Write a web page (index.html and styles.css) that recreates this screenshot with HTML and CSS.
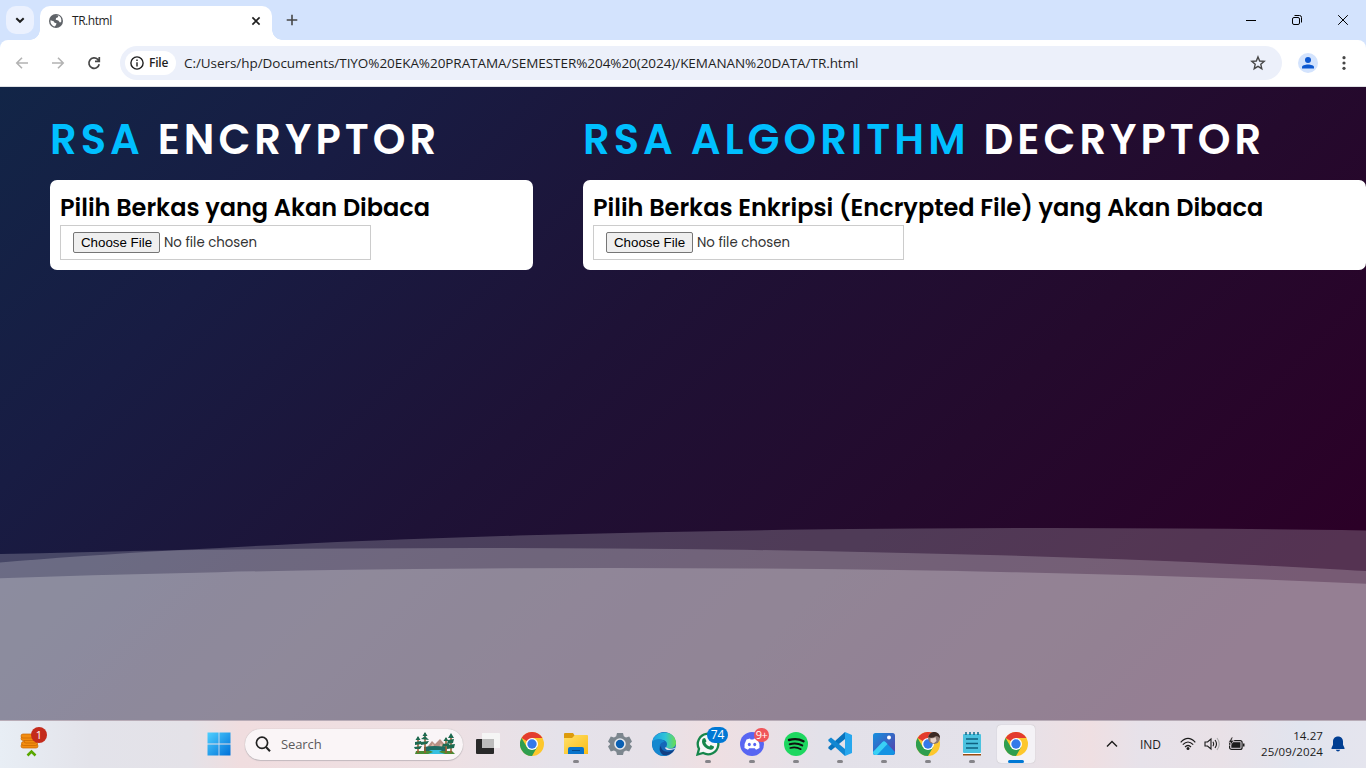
FILE: index.html
```html
<!DOCTYPE html>
<html lang="id">
<head>
<meta charset="utf-8">
<title>TR.html</title>
<link rel="stylesheet" href="styles.css">
</head>
<body>
<div class="desktop">
  <header class="tabstrip">
    <div class="tab-search"><svg width="12" height="12" viewBox="0 0 12 12" fill="none" stroke="#1f1f1f" stroke-width="2"><path d="M2.3 4.2 6 7.8 9.7 4.2"/></svg></div>
    <div class="tab">
      <svg class="globe" width="14" height="14" viewBox="0 0 14 14"><circle cx="7" cy="7" r="7" fill="#5f6368"/><path d="M1.5 6.3 4.6 7.2 5.6 8.7 7.5 9.2 7 11 5.8 12.6C2.8 12 1.2 9.3 1.5 6.3ZM6 1.5l3.5-.2-.6 1.9-1.8.8-.4 1.8 2.6.8 1.6 2 1.3-.7C12.9 4.700 11.500 2.500 9.500 1.500Z" fill="#fff"/></svg>
      <span class="tab-title">TR.html</span>
      <svg class="tab-close" width="10" height="10" viewBox="0 0 10 10" stroke="#1f1f1f" stroke-width="1.6"><path d="M1.400 1.400 8.600 8.600M8.600 1.400 1.400 8.600"/></svg>
    </div>
    <svg class="new-tab" width="12" height="12" viewBox="0 0 12 12" stroke="#474747" stroke-width="1.600"><path d="M6 .7v10.600M.7 6h10.600"/></svg>
    <div class="window-buttons">
      <svg width="12" height="12" viewBox="0 0 12 12" stroke="#000" fill="none"><path d="M1 6.500h10"/></svg>
      <svg width="12" height="12" viewBox="0 0 12 12" stroke="#000" fill="none"><rect x="1.500" y="3.500" width="7" height="7" rx="1.500"/><path d="M3.500 1.500h5a2 2 0 0 1 2 2v5"/></svg>
      <svg width="12" height="12" viewBox="0 0 12 12" stroke="#000" fill="none"><path d="M1.200 1.200l9.600 9.600M10.800 1.200l-9.600 9.600"/></svg>
    </div>
  </header>
  <nav class="toolbar">
    <div class="nav-buttons">
      <svg width="14" height="14" viewBox="0 0 14 14" stroke="#b3b3b3" stroke-width="1.600" fill="none"><path d="M13 7H2M7 1.800 1.800 7 7 12.200"/></svg>
      <svg width="14" height="14" viewBox="0 0 14 14" stroke="#b3b3b3" stroke-width="1.600" fill="none"><path d="M1 7h11M7 1.800 12.200 7 7 12.200"/></svg>
      <svg width="14" height="14" viewBox="0 0 14 14" stroke="#474747" stroke-width="1.700" fill="none"><path d="M12.200 8.200A5.200 5.200 0 1 1 10.800 3.400L12 4.800M12.300 1v4.400H8"/></svg>
    </div>
    <div class="omnibox">
      <div class="file-chip"><svg width="14" height="14" viewBox="0 0 14 14"><circle cx="7" cy="7" r="6.100" fill="none" stroke="#1f1f1f" stroke-width="1.400"/><path d="M6.300 6.200h1.400v4.200H6.300zM6.300 3.600h1.400V5H6.300z" fill="#1f1f1f"/></svg><span class="file-label">File</span></div>
      <span class="url">C:/Users/hp/Documents/TIYO%20EKA%20PRATAMA/SEMESTER%204%20(2024)/KEMANAN%20DATA/TR.html</span>
      <svg class="star" width="16" height="16" viewBox="0 0 16 16" fill="none" stroke="#474747" stroke-width="1.400"><path d="M8 1.900 9.700 6l4.500.4-3.400 2.900 1 4.400L8 11.400l-3.800 2.300 1-4.400L1.800 6.400 6.300 6z"/></svg>
    </div>
    <svg class="profile" width="20" height="20" viewBox="0 0 20 20"><circle cx="10" cy="10" r="10" fill="#d3e3fd"/><circle cx="10" cy="7" r="3" fill="#0b57d0"/><path d="M4 15.500v-1.300c0-3.600 12-3.600 12 0v1.300z" fill="#0b57d0"/></svg>
    <svg class="menu-dots" width="4" height="16" viewBox="0 0 4 16" fill="#474747"><circle cx="2" cy="2.700" r="1.600"/><circle cx="2" cy="8" r="1.600"/><circle cx="2" cy="13.300" r="1.600"/></svg>
  </nav>
  <main class="page">
    <svg class="waves" width="1366" height="192" viewBox="0 0 1366 192" fill="#fff">
      <path fill-opacity=".2" d="M-316 192V96A1366 96 0 0 1 2416 96V192Z"/>
      <path fill-opacity=".2" d="M-889 192V116A1366 96 0 0 1 1843 116V192Z"/>
      <path fill-opacity=".225" d="M-751 192V136A1366 96 0 0 1 1981 136V192Z"/>
    </svg>
    <section class="panel panel-encrypt">
      <h1><span class="accent">RSA</span> ENCRYPTOR</h1>
      <div class="card">
        <h2>Pilih Berkas yang Akan Dibaca</h2>
        <div class="file-input"><button class="choose">Choose File</button><span class="no-file">No file chosen</span></div>
      </div>
    </section>
    <section class="panel panel-decrypt">
      <h1><span class="accent">RSA ALGORITHM</span> DECRYPTOR</h1>
      <div class="card">
        <h2>Pilih Berkas Enkripsi (Encrypted File) yang Akan Dibaca</h2>
        <div class="file-input"><button class="choose">Choose File</button><span class="no-file">No file chosen</span></div>
      </div>
    </section>
  </main>
  <footer class="taskbar">
    <svg width="0" height="0" class="defs"><defs>
      <linearGradient id="win" x2="1" y2="1"><stop stop-color="#4fd0ff"/><stop offset="1" stop-color="#0070d8"/></linearGradient>
      <linearGradient id="gold" x2="1" y2="1"><stop stop-color="#ffe06b"/><stop offset="1" stop-color="#fbbc13"/></linearGradient>
      <linearGradient id="edgeTop"><stop stop-color="#1b9de2"/><stop offset=".55" stop-color="#2fc4d8"/><stop offset="1" stop-color="#6bdd4c"/></linearGradient>
      <linearGradient id="photo" x2="1" y2="1"><stop stop-color="#1490df"/><stop offset="1" stop-color="#5b3ca8"/></linearGradient>
      <symbol id="chrome" viewBox="0 0 24 24"><circle cx="12" cy="12" r="12" fill="#fdc72c"/><path d="M12 12 1.600 6A12 12 0 0 1 22.400 6H12Z" fill="#e33b2e"/><path d="M1.600 6A12 12 0 0 0 12 24l5.200-9L12 12 6.800 15Z" fill="#2f9e4f"/><circle cx="12" cy="12" r="6" fill="#fff"/><circle cx="12" cy="12" r="4.700" fill="#3579ea"/></symbol>
    </defs></svg>
    <div class="widgets">
      <svg width="20" height="26" viewBox="0 0 20 26"><g fill="#f28c0f" stroke="#c96500" stroke-width=".7"><rect x="1" y="13" width="17" height="4" rx="2"/><rect x="1.500" y="10.500" width="16" height="4" rx="2"/><rect x="4" y="8" width="13" height="4" rx="2"/><rect x="1" y="5.500" width="14" height="4" rx="2"/><rect x="1" y="3" width="15" height="4" rx="2"/></g><path d="M7.500 24.500 11.500 20.500 15.500 24.500" stroke="#58a700" stroke-width="2.500" fill="none"/></svg>
      <span class="badge badge-red">1</span>
    </div>
    <div class="apps">
      <div class="app start"><svg width="24" height="24" viewBox="0 0 24 24" fill="url(#win)"><path d="M.5.500h11.100v11.100H.5zM12.400.5h11.100v11.100H12.400zM.5 12.400h11.100v11.100H.5zM12.400 12.400h11.100v11.100H12.400z"/></svg></div>
      <div class="search">
        <svg width="16" height="16" viewBox="0 0 16 16" fill="none" stroke="#222" stroke-width="1.700"><circle cx="7" cy="6.800" r="5.600"/><path d="M11 11l4 4.200" stroke-width="2"/></svg>
        <span class="search-label">Search</span>
        <svg class="scene" width="42" height="24" viewBox="0 0 42 24"><path d="M10 19 18 9l3 3 5-5 7 8v4z" fill="#b99084"/><path d="M15 17 19 11l2 6zM24 17l3-6 3 6z" fill="#ddb8a6"/><path d="M10 15q10-2 22 0v4H10z" fill="#1e6b62"/><path d="M2 19h36l3 3H1z" fill="#4a8c35"/><path d="M15 18h13l-3 2 6 2H14l5-2z" fill="#35bfe0"/><g stroke="#9a5a2c" stroke-width="1.500"><path d="M4 5v16M11 1v20M32 6v15M37 3v18"/></g><g fill="#1d6a50"><path d="M11 0l2.500 4h-5zM11 4l4 4-8-1zM7 10l8-1-2 3-6 1zM4 4l2.500 4h-5zM1 10l6-1 1 3-7 1zM0 15l8-1-2 3H1zM32 5l2.500 4h-5zM29 12l7-1-2 3-6 1zM37 1l3 5h-6zM34 8l6-1-1 4-6 1zM33 13l8-1-1 4-7 1z"/></g></svg>
      </div>
      <div class="app"><svg width="24" height="24" viewBox="0 0 24 24"><path d="M0 8q0-1 1-1h17v14q0 1-1 1H1q-1 0-1-1z" fill="#292929"/><path d="M6 1h17q1 0 1 1v14H7q-1 0-1-1z" fill="#f5f5f5"/><path d="M6 7h12v9H6z" fill="#bcbcbc"/></svg></div>
      <div class="app"><svg width="24" height="24"><use href="#chrome"/></svg></div>
      <div class="app running"><svg width="24" height="24" viewBox="0 0 24 24"><path d="M0 2q0-1 1-1h8l2 3-2 3H0z" fill="#dd9b0c"/><path d="M0 6h8l3-3h12q1 0 1 1v18H0z" fill="url(#gold)"/><path d="M4 22v-5q0-2 2-2h12q2 0 2 2v5z" fill="#0873cb"/><path d="M8 18.500h8" stroke="#044a8c"/></svg></div>
      <div class="app"><svg width="24" height="24" viewBox="0 0 24 24"><path d="M9 1h6l.8 3.200 2.200 1.300 3.200-1L24 9.500l-2.300 2.500L24 14.500l-2.800 5-3.200-1-2.200 1.300L15 23H9l-.8-3.200L6 18.500l-3.200 1L0 14.500 2.300 12 0 9.500l2.800-5 3.200 1 2.200-1.300z" fill="#7c868e"/><circle cx="12" cy="12" r="5.800" fill="#e7e9ed"/><circle cx="12" cy="12" r="4.200" fill="#0960b3"/></svg></div>
      <div class="app"><svg width="24" height="24" viewBox="0 0 24 24"><circle cx="12" cy="12" r="12" fill="#1467b8"/><path d="M.3 10C2-2 22-3 24 10c.5 6-6 8-10 5.500 2-3 1-7-3-7.500-4-.5-8 0-10.700 2z" fill="url(#edgeTop)"/><path d="M.3 10C3 6 11 6 12.500 10c-4-.5-7 5-3 10 1.500 2 4 3 6 3.400C7 26-1 19 .3 10z" fill="#1587cf"/><path d="M9 14c0 5 6 8 13.500 3.500C19 23 14 24 11 23 7 20 7 16 9 14z" fill="#113f83"/><path d="M14.500 15.500c2.500 1.700 6 1.500 8.700.3l-.6 1.300C17 19 13.500 18 12.800 15.500z" fill="#e8e5ed"/></svg></div>
      <div class="app running"><svg width="24" height="24" viewBox="0 0 24 24"><path d="M1.500 22.500 3 16.800A10.300 10.300 0 1 1 7.200 21z" fill="#f7f7f7" stroke="#16864b" stroke-width="2.300"/><path d="M7 6.500 9 6l1.500 3.200-1.200 1.600q1.300 2.700 4 3.700l1.500-1.500L18 14.600c.2 2-1.500 3.400-3.500 3.200C10 17 6 13 6 9.500q0-2 1-3z" fill="#16864b"/></svg><span class="badge badge-blue">74</span></div>
      <div class="app running"><svg width="24" height="24" viewBox="0 0 24 24"><circle cx="12" cy="12" r="12" fill="#5865f2"/><path d="M6.500 7.500 10 6.500l.6 1h2.800l.6-1 3.500 1Q20 11.500 19.500 16l-3.500 1.700-1.200-1.500H9.200L8 17.700 4.500 16Q4 11.500 6.500 7.500Z" fill="#fff"/><ellipse cx="9.300" cy="12.500" rx="1.500" ry="1.800" fill="#5865f2"/><ellipse cx="14.700" cy="12.500" rx="1.500" ry="1.800" fill="#5865f2"/></svg><span class="badge badge-coral">9+</span></div>
      <div class="app running"><svg width="24" height="24" viewBox="0 0 24 24" fill="none" stroke="#101010" stroke-linecap="round"><circle cx="12" cy="12" r="12" fill="#1ed760" stroke="none"/><path d="M5 8q8-2.300 14.500 1.200" stroke-width="2.400"/><path d="M5.700 12.200q6.800-2 12.500 1.200" stroke-width="2"/><path d="M6.300 16q5.700-1.500 10.500 1.200" stroke-width="1.700"/></svg></div>
      <div class="app running"><svg width="24" height="24" viewBox="0 0 24 24"><path d="M17 0 24 3v18l-7 3z" fill="#27a7ee"/><path d="M17 0v7L3 18.500.4 16.500v-1.400z" fill="#0873bd"/><path d="M17 24v-7L3 5.500.4 7.500v1.400z" fill="#1187d2"/></svg></div>
      <div class="app running"><svg width="22" height="22" viewBox="0 0 22 22"><rect width="22" height="22" rx="2.500" fill="url(#photo)"/><path d="M0 19 9.500 9q1.500-1.500 3 0L22 19q0 3-2.500 3h-17Q0 22 0 19z" fill="#1593e3"/><path d="M0 19 9.500 9q1.500-1.500 3 0l2 2L4 22H2.500Q0 22 0 19z" fill="#3ad0f5"/><circle cx="16" cy="4.500" r="2" fill="#fff"/></svg></div>
      <div class="app running"><svg width="24" height="24" viewBox="0 0 24 24"><use href="#chrome"/><circle cx="18" cy="6" r="6" fill="#8a7770"/><path d="M12.300 5Q14-.5 19 0q5 1 5 6-2-2-4-2-4 3-7.700 1z" fill="#3c2924"/><path d="M14.500 6q3 1 5-1l1 4-3 2.500-3-2z" fill="#e7d1c8"/></svg></div>
      <div class="app running"><svg width="20" height="24" viewBox="0 0 20 24"><path d="M1 20h18v3.500H1z" fill="#9b4c11"/><path d="M1 20h18v2H1z" fill="#fff"/><rect x="1" y="2" width="18" height="19" rx="1" fill="#4bc2df"/><path d="M4 0v3M8 0v3M12 0v3M16 0v3" stroke="#126a89" stroke-width="1.500"/><path d="M4 7h12M4 11.500h12M4 16h12" stroke="#0f6180" stroke-width="1.600"/></svg></div>
      <div class="app active"><svg width="24" height="24"><use href="#chrome"/></svg></div>
    </div>
    <div class="tray">
      <svg class="chevron" width="12" height="8" viewBox="0 0 12 8" fill="none" stroke="#1b1b1b" stroke-width="1.400"><path d="M1 6.500 6 1.500l5 5"/></svg>
      <span class="lang">IND</span>
      <svg class="wifi" width="16" height="14" viewBox="0 0 16 14" fill="none" stroke="#1b1b1b" stroke-width="1.200"><path d="M.7 5.300Q8-2.500 15.300 5.300M2.800 7.700q5.200-5.400 10.400 0M5 10q3-3 6 0"/><circle cx="8" cy="11.500" r="1.500" fill="#1b1b1b" stroke="none"/></svg>
      <svg class="sound" width="16" height="14" viewBox="0 0 16 14" fill="none" stroke="#1b1b1b" stroke-width="1.100"><path d="M1 5h2.500L7 2v10L3.500 9H1z"/><path d="M9 4.800q1.500 2.200 0 4.400M11 3q3 4 0 8"/><path d="M13 1q4.500 6 0 12" stroke="#aaa"/></svg>
      <svg class="battery" width="17" height="14" viewBox="0 0 17 14"><rect x="1.600" y="3.600" width="12.500" height="8.800" rx="2" fill="none" stroke="#1b1b1b" stroke-width="1.200"/><rect x="3.300" y="5.200" width="9.200" height="5.600" fill="#1b1b1b"/><path d="M15 6.500h1.500v3H15z" fill="#1b1b1b"/><path d="M3.700 0 .5 5.500h2L1.800 9 6 3.500H3.700L5 0z" fill="#1b1b1b" stroke="#ede3e9" stroke-width=".6"/></svg>
      <div class="clock"><span class="time">14.27</span><span class="date">25/09/2024</span></div>
      <svg class="bell" width="14" height="16" viewBox="0 0 14 16" fill="#003e92"><path d="M7 .5c3.200 0 5 2.300 5 5v3.300L13.500 12v1H.5v-1L2 8.800V5.500c0-2.700 1.800-5 5-5zM4.800 13.700h4.400q-.7 1.700-2.200 1.700t-2.200-1.700z"/></svg>
    </div>
  </footer>
</div>
</body>
</html>
```
FILE: styles.css
```css
* { box-sizing: border-box; }
body { margin: 0; overflow: hidden; }
svg { display: block; flex: none; }
.desktop { width: 1366px; height: 768px; display: flex; flex-direction: column; overflow: hidden; font-family: "Open Sans", "Noto Sans", sans-serif; background: #d3e3fd; }

.tabstrip { height: 40px; flex: none; display: flex; align-items: flex-start; padding: 6px 16px 0 6px; background: #d3e3fd; }
.tab-search { width: 28px; height: 28px; border-radius: 10px; background: #ebf1fe; display: flex; align-items: center; justify-content: center; }
.tab { position: relative; width: 232px; height: 34px; margin-left: 6px; padding: 0 11px 5px 9px; border-radius: 10px 10px 0 0; background: #fff; display: flex; align-items: center; }
.tab::before, .tab::after { content: ""; position: absolute; bottom: 0; width: 10px; height: 10px; }
.tab::before { left: -10px; background: radial-gradient(circle at 0 0, transparent 9.5px, #fff 10px); }
.tab::after { right: -10px; background: radial-gradient(circle at 100% 0, transparent 9.5px, #fff 10px); }
.tab-title { margin-left: 9px; font-size: 12px; color: #1f1f1f; letter-spacing: -.45px; }
.tab-close { margin-left: auto; }
.new-tab { margin: 8px 0 0 14px; }
.window-buttons { margin: 8px 1px 0 auto; display: flex; gap: 34px; }

.toolbar { height: 47px; flex: none; display: flex; align-items: center; padding: 0 20px 1px 15px; background: #fff; border-radius: 8px 8px 0 0; border-bottom: 1px solid #dfe1e5; }
.nav-buttons { display: flex; gap: 22px; }
.omnibox { width: 1162px; height: 34px; margin-left: 19px; padding: 0 16px 0 5px; border-radius: 17px; background: #ecf0fa; display: flex; align-items: center; }
.file-chip { width: 51px; height: 24px; border-radius: 12px; padding-left: 5px; background: #fff; display: flex; align-items: center; gap: 5px; }
.file-label { font-size: 12px; font-weight: 600; color: #1f1f1f; letter-spacing: -.2px; }
.url { margin-left: 8px; font-size: 13.5px; color: #1f1f1f; white-space: nowrap; letter-spacing: -.055px; }
.star { margin-left: auto; }
.profile { margin-left: 16px; }
.menu-dots { margin-left: 24px; }

.page { position: relative; height: 633px; flex: none; display: flex; gap: 50px; padding: 31px 0 0 50px; background: linear-gradient(135deg, #122547 0%, #181c43 20%, #1e1236 43%, #240a2d 66%, #2b0027 90%); }
.waves { position: absolute; left: 0; bottom: 0; }
.panel { position: relative; font-family: Poppins, Inter, sans-serif; }
.panel-encrypt { width: 483px; }
.panel-decrypt { width: 783px; }
h1 { margin: 0; height: 62px; line-height: 43px; font-size: 41.6px; font-weight: 600; letter-spacing: 4px; color: #fff; white-space: nowrap; }
.accent { color: #00bfff; }
.card { height: 90px; padding: 10px; border-radius: 7px; background: #fff; }
h2 { margin: 0; height: 35px; line-height: 36px; font-size: 24px; font-weight: 600; color: #000; white-space: nowrap; }
.file-input { width: 311px; height: 35px; padding: 0 12px; border: 1px solid #ccc; display: flex; align-items: center; gap: 4px; }
.choose { width: 87px; height: 21px; padding: 0; border: 1px solid #767676; border-radius: 2px; background: #efefef; font: 13.333px "Liberation Sans", Arial, sans-serif; color: #000; white-space: nowrap; }
.no-file { font-size: 13.333px; color: #333; }

.taskbar { position: relative; height: 48px; flex: none; border-top: 1px solid #b8acb7; background: linear-gradient(90deg, #e8eef5 0, #e3e3ea 90px, #e4e2e8 190px, #f0dddf 240px, #eee0e3 440px, #e5e2ea 560px, #e6e1e8 650px, #efdfe2 710px, #e3e1e9 820px, #e4e2ea 1000px, #efdfe2 1090px, #e7e2ea 1140px, #e9e1e7 1220px, #e1e4ee 1300px, #e5e5ee 100%); display: flex; align-items: center; padding-bottom: 1px; color: #1b1b1b; }
.defs { position: absolute; }
.widgets { position: relative; width: 27px; height: 32px; margin-left: 20px; padding-top: 3px; }
.badge { position: absolute; display: flex; align-items: center; justify-content: center; height: 16px; border-radius: 8px; color: #fff; font-size: 11px; line-height: 16px; }
.badge-red { top: -1px; right: 0; width: 16px; background: #c42b1c; }
.apps { display: flex; align-items: center; margin-left: 151px; }
.app { position: relative; width: 38px; height: 38px; margin: 0 3px; border-radius: 4px; display: flex; align-items: center; justify-content: center; }
.start { margin: 0 7px 0 2px; }
.running::after, .active::after { content: ""; position: absolute; bottom: 0; left: 16px; width: 6px; height: 3px; border-radius: 2px; background: #858489; }
.active { background: #f4f2f6; box-shadow: 0 0 1px #aaa; }
.active::after { left: 11px; width: 16px; background: #0078d4; bottom: 0; }
.badge-blue { top: 2px; right: -1px; width: 21px; background: #0078d4; font-size: 12px; }
.badge-coral { top: 3px; right: 2px; width: 15px; height: 14px; background: #f0565b; font-size: 11px; letter-spacing: -.5px; }
.search { width: 218px; height: 31px; margin-right: 3px; border-radius: 16px; padding: 0 7px 0 10px; background: #faf5f7; box-shadow: 0 0 1px #aaa, 0 1px 1px #c5bbc1; display: flex; align-items: center; }
.search-label { margin-left: 10px; font-size: 13px; color: #5c5a5c; letter-spacing: -.1px; }
.scene { margin-left: auto; }
.tray { position: absolute; top: 0; right: 21px; height: 46px; display: flex; align-items: center; }
.lang { margin-left: 22px; width: 22px; font-size: 12px; letter-spacing: -.1px; }
.wifi { margin-left: 18px; }
.sound { margin-left: 8px; }
.battery { margin-left: 8px; }
.clock { width: 70px; margin-left: 8px; display: flex; flex-direction: column; align-items: flex-end; font-size: 11.500px; line-height: 16px; letter-spacing: .1px; }
.bell { margin-left: 8px; }
```
